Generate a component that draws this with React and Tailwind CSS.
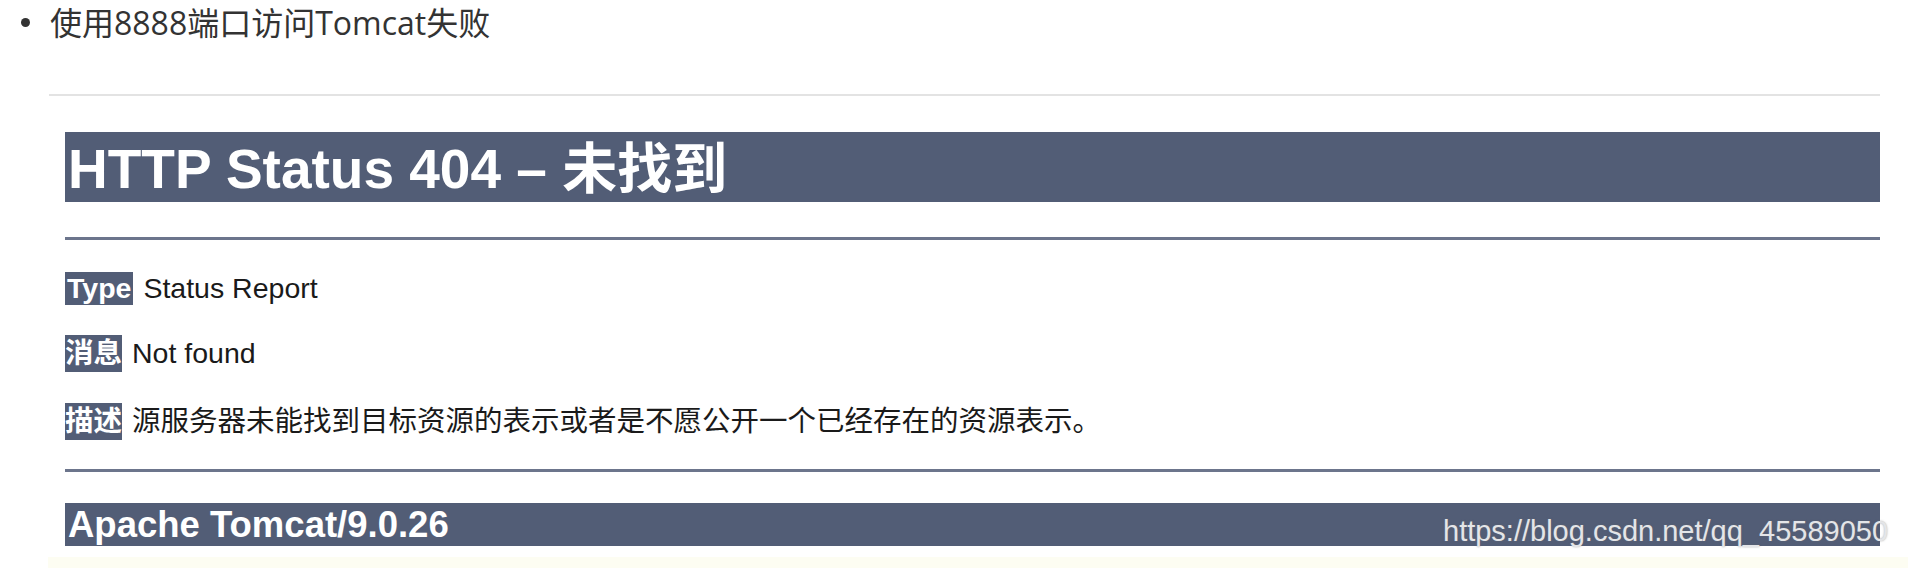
export default function App() {
  const body = '"Liberation Sans", "Noto Sans CJK SC", Arial, sans-serif';
  return (
    <div className="relative w-[1908px] h-[577px] overflow-hidden bg-white">
      {/* bullet line */}
      <div
        className="flex items-center h-[45px] text-[32px] text-[#333333]"
        style={{ fontFamily: '"Open Sans", "Noto Sans CJK SC", sans-serif' }}
      >
        <span className="ml-[21px] w-[9px] h-[9px] rounded-full bg-[#333333]" />
        <span className="ml-[20px] whitespace-nowrap">使用8888端口访问Tomcat失败</span>
      </div>

      <div className="ml-[49px] w-[1831px] mt-[49px] h-[2px] bg-[#e3e3e3]" />

      {/* Tomcat page image */}
      <div className="ml-[65px] w-[1815px] mt-[36px]" style={{ fontFamily: body }}>
        <h1 className="h-[70px] bg-[#525d76] pl-[3px] pt-[4px] text-[55px] leading-[66px] font-bold text-white whitespace-nowrap overflow-hidden">
          HTTP Status 404 – 未找到
        </h1>
        <div className="mt-[35px] h-[3px] bg-[#6c758c]" />

        <div className="mt-[32px] flex items-center gap-[10px] h-[33px] text-[28.5px] text-[#1a1a1a] whitespace-nowrap">
          <b className="inline-block h-[33px] leading-[33px] bg-[#525d76] text-white px-[2px]">Type</b>
          <span>Status Report</span>
        </div>
        <div className="mt-[30px] flex items-center gap-[10px] h-[37px] text-[28.5px] text-[#1a1a1a] whitespace-nowrap">
          <b className="inline-block h-[37px] leading-[37px] bg-[#525d76] text-white">消息</b>
          <span>Not found</span>
        </div>
        <div className="mt-[31px] flex items-center gap-[10px] h-[37px] text-[28.5px] text-[#1a1a1a] whitespace-nowrap">
          <b className="inline-block h-[37px] leading-[37px] bg-[#525d76] text-white">描述</b>
          <span>源服务器未能找到目标资源的表示或者是不愿公开一个已经存在的资源表示。</span>
        </div>

        <div className="mt-[29px] h-[3px] bg-[#6c758c]" />

        <h3 className="mt-[31px] h-[43px] bg-[#525d76] pl-[3px] text-[36.5px] leading-[43px] font-bold text-white whitespace-nowrap overflow-hidden">
          Apache Tomcat/9.0.26
        </h3>
      </div>

      <div className="ml-[48px] mt-[11px] h-[11px] bg-[#fdfdf2]" />

      {/* watermark */}
      <div
        className="absolute left-[1443px] top-[517px] text-[29px] leading-[29px] text-[#e4e5e8] whitespace-nowrap [text-shadow:0_0_2px_rgba(110,110,110,0.55)]"
        style={{ fontFamily: '"Liberation Sans", Arial, sans-serif' }}
      >
        https://blog.csdn.net/qq_45589050
      </div>
    </div>
  );
}
